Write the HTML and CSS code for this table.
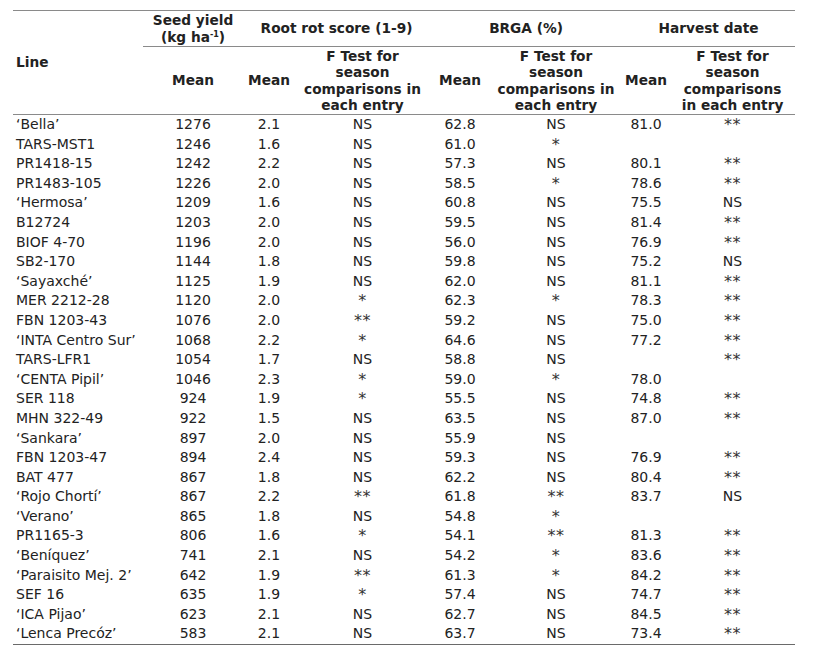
FILE: index.html
```html
<!DOCTYPE html>
<html lang="en">
<head>
<meta charset="utf-8">
<title>Seed yield table</title>
<link rel="stylesheet" href="styles.css">
</head>
<body>
<table class="data">
  <colgroup>
    <col class="c-line"><col class="c-yield"><col class="c-rrm"><col class="c-rrf"><col class="c-bm"><col class="c-bf"><col class="c-hm"><col class="c-hf">
  </colgroup>
  <thead>
    <tr class="h1">
      <th rowspan="2" class="line-h">Line</th>
      <th class="grp">Seed yield<br>(kg ha<sup>-1</sup>)</th>
      <th colspan="2" class="grp">Root rot score (1-9)</th>
      <th colspan="2" class="grp">BRGA (%)</th>
      <th colspan="2" class="grp">Harvest date</th>
    </tr>
    <tr class="h2">
      <th>Mean</th>
      <th>Mean</th>
      <th>F Test for<br>season<br>comparisons in<br>each entry</th>
      <th>Mean</th>
      <th>F Test for<br>season<br>comparisons in<br>each entry</th>
      <th>Mean</th>
      <th>F Test for<br>season<br>comparisons<br>in each entry</th>
    </tr>
  </thead>
  <tbody>
    <tr><td>‘Bella’</td><td>1276</td><td>2.1</td><td>NS</td><td>62.8</td><td>NS</td><td>81.0</td><td class="st">**</td></tr>
    <tr><td>TARS-MST1</td><td>1246</td><td>1.6</td><td>NS</td><td>61.0</td><td class="st">*</td><td></td><td></td></tr>
    <tr><td>PR1418-15</td><td>1242</td><td>2.2</td><td>NS</td><td>57.3</td><td>NS</td><td>80.1</td><td class="st">**</td></tr>
    <tr><td>PR1483-105</td><td>1226</td><td>2.0</td><td>NS</td><td>58.5</td><td class="st">*</td><td>78.6</td><td class="st">**</td></tr>
    <tr><td>‘Hermosa’</td><td>1209</td><td>1.6</td><td>NS</td><td>60.8</td><td>NS</td><td>75.5</td><td>NS</td></tr>
    <tr><td>B12724</td><td>1203</td><td>2.0</td><td>NS</td><td>59.5</td><td>NS</td><td>81.4</td><td class="st">**</td></tr>
    <tr><td>BIOF 4-70</td><td>1196</td><td>2.0</td><td>NS</td><td>56.0</td><td>NS</td><td>76.9</td><td class="st">**</td></tr>
    <tr><td>SB2-170</td><td>1144</td><td>1.8</td><td>NS</td><td>59.8</td><td>NS</td><td>75.2</td><td>NS</td></tr>
    <tr><td>‘Sayaxché’</td><td>1125</td><td>1.9</td><td>NS</td><td>62.0</td><td>NS</td><td>81.1</td><td class="st">**</td></tr>
    <tr><td>MER 2212-28</td><td>1120</td><td>2.0</td><td class="st">*</td><td>62.3</td><td class="st">*</td><td>78.3</td><td class="st">**</td></tr>
    <tr><td>FBN 1203-43</td><td>1076</td><td>2.0</td><td class="st">**</td><td>59.2</td><td>NS</td><td>75.0</td><td class="st">**</td></tr>
    <tr><td>‘INTA Centro Sur’</td><td>1068</td><td>2.2</td><td class="st">*</td><td>64.6</td><td>NS</td><td>77.2</td><td class="st">**</td></tr>
    <tr><td>TARS-LFR1</td><td>1054</td><td>1.7</td><td>NS</td><td>58.8</td><td>NS</td><td></td><td class="st">**</td></tr>
    <tr><td>‘CENTA Pipil’</td><td>1046</td><td>2.3</td><td class="st">*</td><td>59.0</td><td class="st">*</td><td>78.0</td><td></td></tr>
    <tr><td>SER 118</td><td>924</td><td>1.9</td><td class="st">*</td><td>55.5</td><td>NS</td><td>74.8</td><td class="st">**</td></tr>
    <tr><td>MHN 322-49</td><td>922</td><td>1.5</td><td>NS</td><td>63.5</td><td>NS</td><td>87.0</td><td class="st">**</td></tr>
    <tr><td>‘Sankara’</td><td>897</td><td>2.0</td><td>NS</td><td>55.9</td><td>NS</td><td></td><td></td></tr>
    <tr><td>FBN 1203-47</td><td>894</td><td>2.4</td><td>NS</td><td>59.3</td><td>NS</td><td>76.9</td><td class="st">**</td></tr>
    <tr><td>BAT 477</td><td>867</td><td>1.8</td><td>NS</td><td>62.2</td><td>NS</td><td>80.4</td><td class="st">**</td></tr>
    <tr><td>‘Rojo Chortí’</td><td>867</td><td>2.2</td><td class="st">**</td><td>61.8</td><td class="st">**</td><td>83.7</td><td>NS</td></tr>
    <tr><td>‘Verano’</td><td>865</td><td>1.8</td><td>NS</td><td>54.8</td><td class="st">*</td><td></td><td></td></tr>
    <tr><td>PR1165-3</td><td>806</td><td>1.6</td><td class="st">*</td><td>54.1</td><td class="st">**</td><td>81.3</td><td class="st">**</td></tr>
    <tr><td>‘Beníquez’</td><td>741</td><td>2.1</td><td>NS</td><td>54.2</td><td class="st">*</td><td>83.6</td><td class="st">**</td></tr>
    <tr><td>‘Paraisito Mej. 2’</td><td>642</td><td>1.9</td><td class="st">**</td><td>61.3</td><td class="st">*</td><td>84.2</td><td class="st">**</td></tr>
    <tr><td>SEF 16</td><td>635</td><td>1.9</td><td class="st">*</td><td>57.4</td><td>NS</td><td>74.7</td><td class="st">**</td></tr>
    <tr><td>‘ICA Pijao’</td><td>623</td><td>2.1</td><td>NS</td><td>62.7</td><td>NS</td><td>84.5</td><td class="st">**</td></tr>
    <tr><td>‘Lenca Precóz’</td><td>583</td><td>2.1</td><td>NS</td><td>63.7</td><td>NS</td><td>73.4</td><td class="st">**</td></tr>
  </tbody>
</table>
</body>
</html>
```

FILE: styles.css
```css
html, body {
  margin: 0;
  padding: 0;
  background: #ffffff;
}

body {
  font-family: "DejaVu Sans", Verdana, sans-serif;
  font-size: 14px;
  color: #222222;
}

.data {
  margin: 10px 0 0 13px;
  border-collapse: collapse;
  table-layout: fixed;
  width: 782px;
  border-top: 1px solid #8a8a8a;
  border-bottom: 1px solid #6a6a6a;
}

.c-line { width: 130px; }
.c-yield { width: 100px; }
.c-rrm { width: 52px; }
.c-rrf { width: 135px; }
.c-bm { width: 60px; }
.c-bf { width: 132px; }
.c-hm { width: 48px; }
.c-hf { width: 125px; }

th {
  font-weight: bold;
  font-size: 13.7px;
  text-align: center;
  vertical-align: middle;
  padding: 0;
  white-space: nowrap;
}

.h1 th {
  line-height: 17px;
  height: 35px;
}

.h1 th.grp {
  border-bottom: 1px solid #8a8a8a;
}

.h2 th {
  line-height: 16.5px;
  height: 67px;
  border-bottom: 1px solid #8a8a8a;
}

.line-h {
  text-align: left;
  padding-left: 3px;
  border-bottom: 1px solid #8a8a8a;
}

sup {
  font-size: 8px;
  line-height: 0;
  vertical-align: 5px;
}

td {
  padding: 0;
  text-align: center;
  height: 19.6px;
  line-height: 19.6px;
  white-space: nowrap;
}

td:first-child {
  text-align: left;
  padding-left: 3px;
}

td.st {
  font-size: 16px;
  line-height: 19.6px;
  color: #333333;
  letter-spacing: 0.5px;
}
```
